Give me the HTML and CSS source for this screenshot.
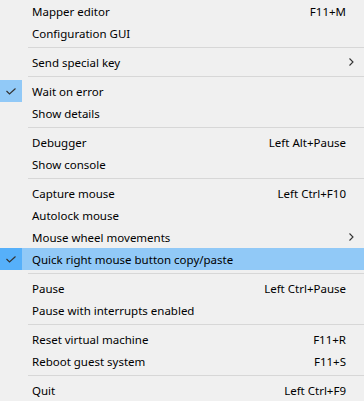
FILE: index.html
```html
<!DOCTYPE html>
<html>
<head>
<meta charset="utf-8">
<link rel="stylesheet" href="styles.css">
</head>
<body>
<div class="menu">
  <div class="item"><span class="check"></span><span class="label">Mapper editor</span><span class="key">F11+M</span></div>
  <div class="item"><span class="check"></span><span class="label">Configuration GUI</span><span class="key"></span></div>
  <div class="sep"></div>
  <div class="item"><span class="check"></span><span class="label">Send special key</span><span class="key"></span><span class="sub"><svg width="5" height="8" viewBox="0 0 5 8"><path d="M0.5 0.5 L4 4 L0.5 7.5" fill="none" stroke="#333" stroke-width="1.1"/></svg></span></div>
  <div class="sep"></div>
  <div class="item checked"><span class="check"><svg width="10" height="7" viewBox="0 0 10 7"><path d="M0.5 3 L3.5 6 L9.5 0.5" fill="none" stroke="#333" stroke-width="1.2"/></svg></span><span class="label">Wait on error</span><span class="key"></span></div>
  <div class="item"><span class="check"></span><span class="label">Show details</span><span class="key"></span></div>
  <div class="sep"></div>
  <div class="item"><span class="check"></span><span class="label">Debugger</span><span class="key">Left Alt+Pause</span></div>
  <div class="item"><span class="check"></span><span class="label">Show console</span><span class="key"></span></div>
  <div class="sep"></div>
  <div class="item"><span class="check"></span><span class="label">Capture mouse</span><span class="key">Left Ctrl+F10</span></div>
  <div class="item"><span class="check"></span><span class="label">Autolock mouse</span><span class="key"></span></div>
  <div class="item"><span class="check"></span><span class="label">Mouse wheel movements</span><span class="key"></span><span class="sub"><svg width="5" height="8" viewBox="0 0 5 8"><path d="M0.5 0.5 L4 4 L0.5 7.5" fill="none" stroke="#333" stroke-width="1.1"/></svg></span></div>
  <div class="item checked selected"><span class="check"><svg width="10" height="7" viewBox="0 0 10 7"><path d="M0.5 3 L3.5 6 L9.5 0.5" fill="none" stroke="#333" stroke-width="1.2"/></svg></span><span class="label">Quick right mouse button copy/paste</span><span class="key"></span></div>
  <div class="sep"></div>
  <div class="item"><span class="check"></span><span class="label">Pause</span><span class="key">Left Ctrl+Pause</span></div>
  <div class="item"><span class="check"></span><span class="label">Pause with interrupts enabled</span><span class="key"></span></div>
  <div class="sep"></div>
  <div class="item"><span class="check"></span><span class="label">Reset virtual machine</span><span class="key">F11+R</span></div>
  <div class="item"><span class="check"></span><span class="label">Reboot guest system</span><span class="key">F11+S</span></div>
  <div class="sep"></div>
  <div class="item"><span class="check"></span><span class="label">Quit</span><span class="key">Left Ctrl+F9</span></div>
</div>
</body>
</html>
```
FILE: styles.css
```css
html, body {
  margin: 0;
  padding: 0;
  background: #f0f0f0;
}
.menu {
  width: 364px;
  height: 401px;
  overflow: hidden;
  background: #f0f0f0;
  font-family: "Noto Sans", "Open Sans", sans-serif;
  font-size: 11.5px;
  color: #000;
}
.item {
  display: flex;
  align-items: center;
  height: 22px;
  position: relative;
}
.item.selected {
  background: #91c9f7;
}
.check {
  width: 22px;
  height: 22px;
  flex: none;
  display: flex;
  align-items: center;
  justify-content: center;
}
.item.checked .check {
  background: #91c9f7;
}
.item.selected .check {
  background: #56b0fa;
}
.check svg {
  margin-top: 1px;
}
.label {
  margin-left: 10px;
  flex: 1;
  white-space: nowrap;
}
.key {
  margin-right: 18px;
  white-space: nowrap;
}
.sub {
  position: absolute;
  right: 10px;
  top: 7px;
  display: flex;
}
.sep {
  height: 1px;
  margin: 3px 0 3px 28px;
  background: #d7d7d7;
}
```
